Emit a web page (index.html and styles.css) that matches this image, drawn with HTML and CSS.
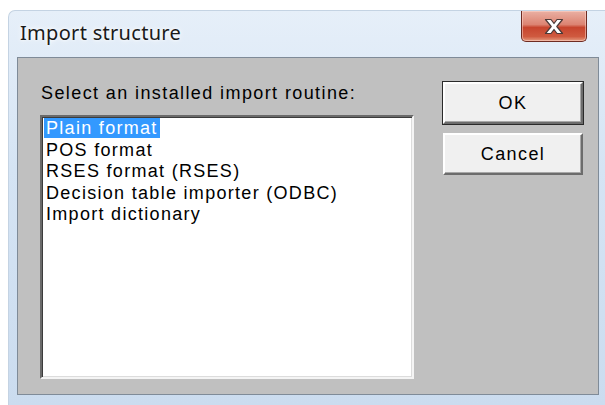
FILE: index.html
```html
<!DOCTYPE html>
<html lang="en">
<head>
<meta charset="utf-8">
<title>Import structure</title>
<link rel="stylesheet" href="styles.css">
</head>
<body>
<div class="window">
  <div class="titlebar">
    <span class="title">Import structure</span>
    <button class="close" type="button" aria-label="Close">
      <svg width="22" height="17" viewBox="0 0 22 17">
        <polygon points="2.5,1.5 8,1.5 11,5.5 14,1.5 19.5,1.5 13.8,8.5 19.5,15.5 14,15.5 11,11.5 8,15.5 2.5,15.5 8.2,8.5" fill="#ffffff" stroke="#4b3a38" stroke-width="1.2" stroke-linejoin="round"/>
      </svg>
    </button>
  </div>
  <div class="client">
    <div class="picker">
      <div class="label">Select an installed import routine:</div>
      <ul class="listbox">
        <li class="item selected"><span>Plain format</span></li>
        <li class="item"><span>POS format</span></li>
        <li class="item"><span>RSES format (RSES)</span></li>
        <li class="item"><span>Decision table importer (ODBC)</span></li>
        <li class="item"><span>Import dictionary</span></li>
      </ul>
    </div>
    <div class="actions">
      <button class="btn default" type="button">OK</button>
      <button class="btn" type="button">Cancel</button>
    </div>
  </div>
</div>
</body>
</html>
```

FILE: styles.css
```css
html, body {
  margin: 0;
  padding: 0;
  background: #ffffff;
  width: 605px;
  height: 405px;
  overflow: hidden;
}

.window {
  margin: 10px 0 0 8px;
  width: 597px;
  height: 395px;
  box-sizing: border-box;
  display: flex;
  flex-direction: column;
  background: linear-gradient(#e6eff9, #d5e4f4 40%, #cbdcef);
  border-top: 1px solid #c4d3e3;
  border-left: 1px solid #c4d3e3;
  border-top-left-radius: 7px;
}

.titlebar {
  height: 46px;
  display: flex;
  align-items: flex-start;
  flex-shrink: 0;
}

.title {
  font-family: "Noto Sans", "Open Sans", sans-serif;
  font-size: 20px;
  letter-spacing: 0.3px;
  color: #1a1a1a;
  margin: 8px 0 0 11px;
  text-shadow: 0 0 6px #ffffff, 0 0 3px #ffffff;
}

.close {
  margin-left: auto;
  margin-right: 18px;
  width: 66px;
  height: 31px;
  padding: 0;
  display: flex;
  align-items: center;
  justify-content: center;
  border: 1px solid #6e2b22;
  border-top: none;
  border-radius: 0 0 5px 5px;
  background: linear-gradient(#eab0a3, #dc8472 45%, #c7452e 55%, #cf5a3f 85%, #e49a7e);
  box-shadow: inset 0 0 0 1px rgba(255, 220, 210, 0.5);
}

.close svg {
  display: block;
}

.client {
  margin-left: 8px;
  width: 582px;
  height: 338px;
  box-sizing: border-box;
  background: #c0c0c0;
  border: 1px solid #7f8b98;
  display: flex;
  align-items: flex-start;
  padding: 24px 15px 16px 22px;
  font-family: "Liberation Sans", Arial, sans-serif;
  font-size: 18px;
  letter-spacing: 1.3px;
  color: #000000;
}

.picker {
  display: flex;
  flex-direction: column;
  padding-top: 1px;
}

.label {
  line-height: 21px;
  margin-left: 1px;
  letter-spacing: 1.4px;
}

.listbox {
  list-style: none;
  margin: 11px 0 0 0;
  padding: 1px 2px;
  width: 374px;
  height: 264px;
  box-sizing: border-box;
  background: #ffffff;
  border-style: solid;
  border-width: 2px;
  border-color: #6a6a6a #f4f4f4 #f4f4f4 #6a6a6a;
  box-shadow: inset 1px 1px 0 #3c3c3c, inset -1px -1px 0 #dcdcdc;
}

.item {
  height: 21.5px;
  line-height: 21.5px;
  white-space: nowrap;
}

.item span {
  padding: 0 2px;
}

.item.selected span {
  background: #3399ff;
  color: #ffffff;
}

.actions {
  display: flex;
  flex-direction: column;
  gap: 9px;
  margin-left: 29px;
}

.btn {
  width: 140px;
  height: 42px;
  padding: 0;
  font-family: "Liberation Sans", Arial, sans-serif;
  font-size: 18px;
  letter-spacing: 1.4px;
  color: #000000;
  background: #f0f0f0;
  border-style: solid;
  border-width: 2px;
  border-color: #ffffff #6c6c6c #6c6c6c #ffffff;
  box-shadow: inset -1px -1px 0 #a8a8a8;
}

.btn.default {
  outline: 1px solid #2a2a2a;
  outline-offset: 0;
}
```
